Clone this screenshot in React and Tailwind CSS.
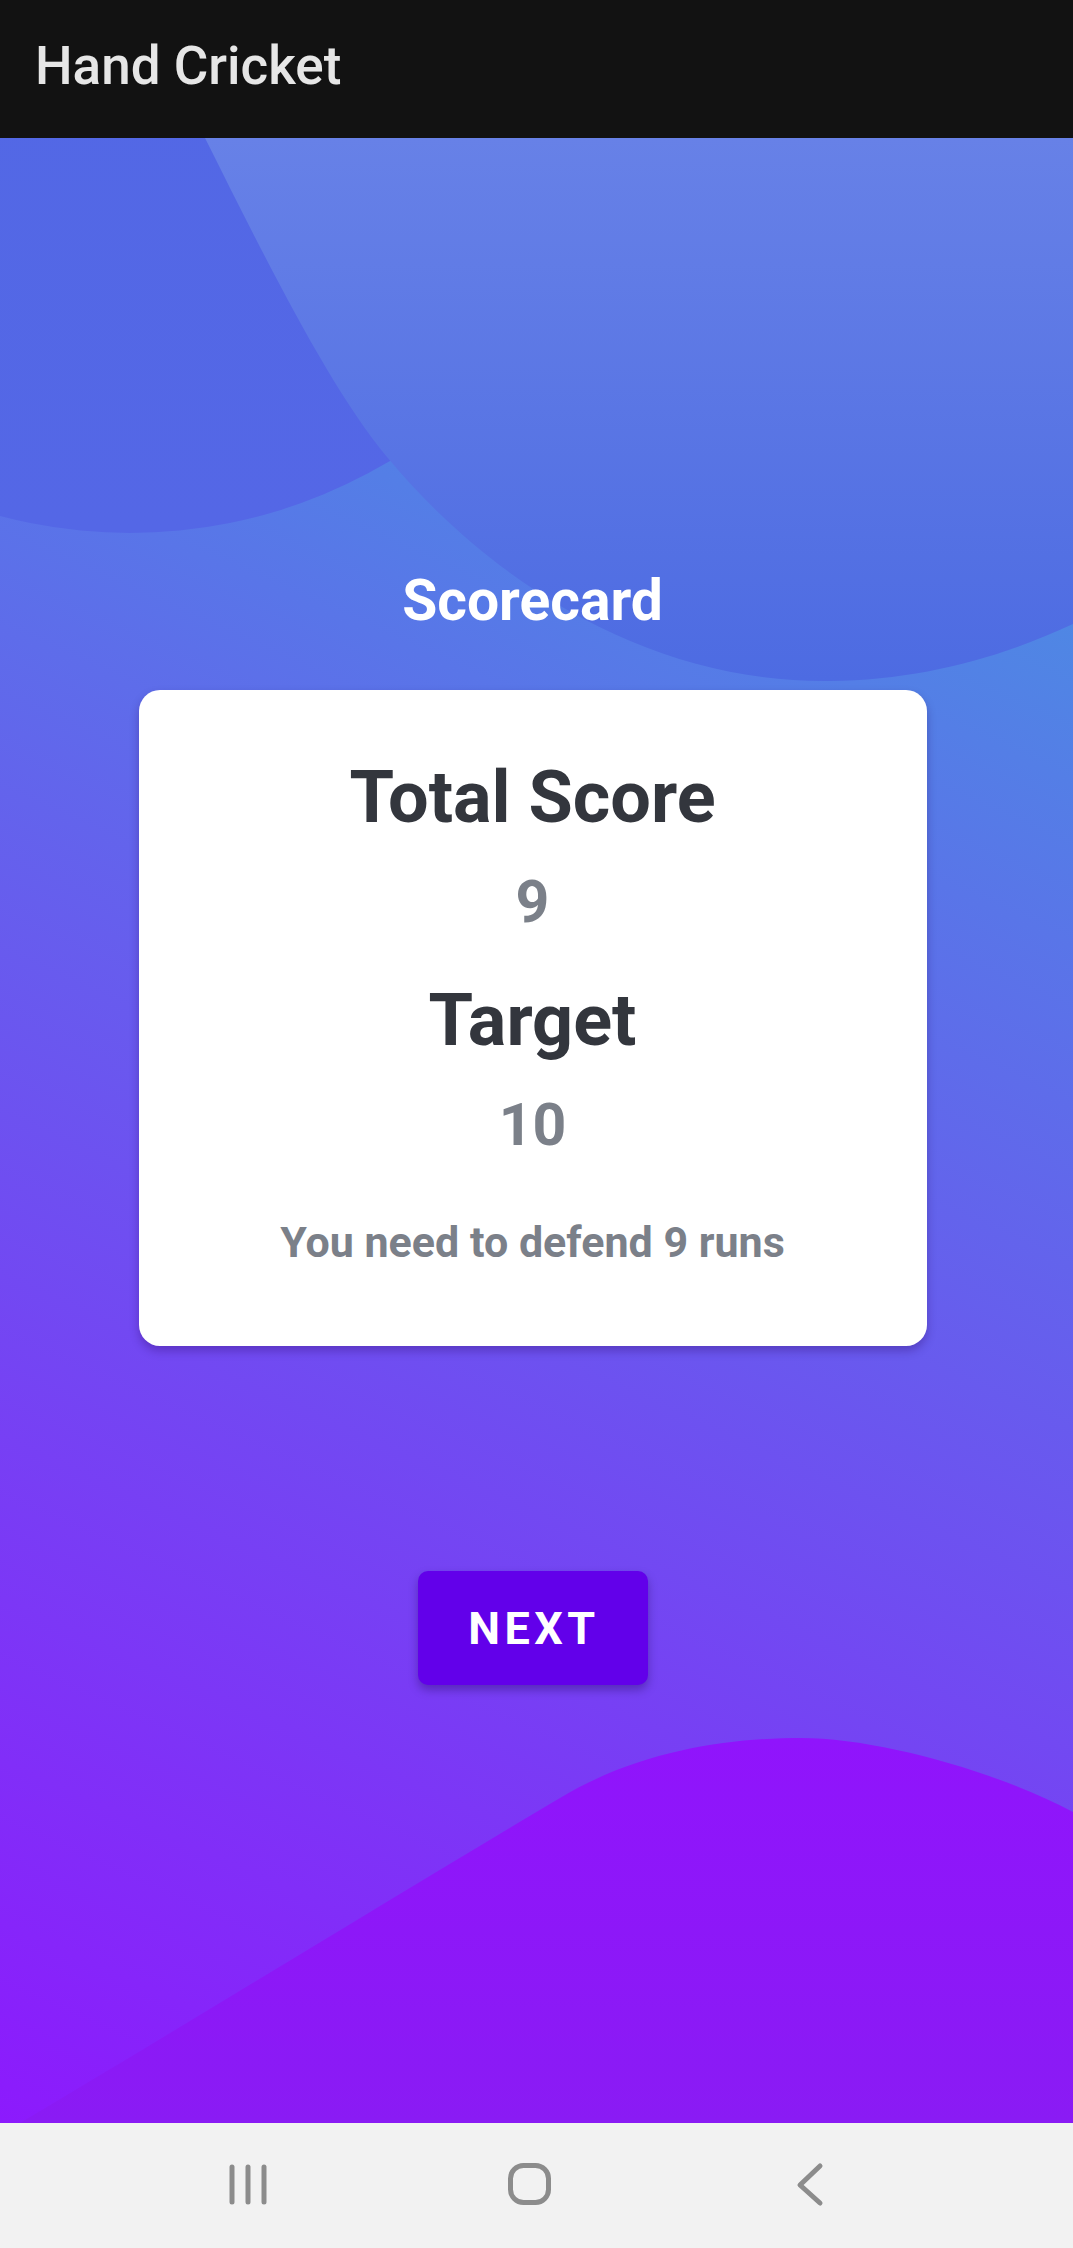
const font = { fontFamily: "Roboto, 'Liberation Sans', sans-serif" };

function Backdrop() {
  return (
    <svg
      className="absolute inset-0 h-full w-full"
      viewBox="0 0 1073 1985"
      preserveAspectRatio="none"
    >
      <defs>
        <linearGradient id="tl" x1="0" y1="0" x2="0" y2="1">
          <stop offset="0" stopColor="#5169e4" />
          <stop offset="1" stopColor="#5467e6" />
        </linearGradient>
        <linearGradient id="big" x1="0" y1="0" x2="0" y2="1">
          <stop offset="0" stopColor="#6781e7" />
          <stop offset="1" stopColor="#4d6be2" />
        </linearGradient>
        <linearGradient id="wave" x1="0" y1="0" x2="0" y2="1">
          <stop offset="0" stopColor="#9014fc" />
          <stop offset="1" stopColor="#8a1bf4" />
        </linearGradient>
      </defs>
      <circle cx="130" cy="-110" r="505" fill="url(#tl)" />
      <path
        d="M205 0 C270 130 330 250 387 319 C500 455 660 545 830 543 C920 542 1000 520 1073 486 L1073 0 Z"
        fill="url(#big)"
      />
      <path
        d="M20 1985 C200 1878 400 1755 560 1660 C640 1612 730 1600 801 1600 C880 1600 1000 1635 1073 1674 L1073 1985 Z"
        fill="url(#wave)"
      />
    </svg>
  );
}

function NavBar() {
  return (
    <div className="flex h-[125px] items-start bg-[#f2f2f2]">
      <svg width="1073" height="125" viewBox="0 0 1073 125">
        <g stroke="#8c8c8c" strokeWidth="5" strokeLinecap="round" fill="none">
          <line x1="232" y1="44" x2="232" y2="79" />
          <line x1="248" y1="44" x2="248" y2="79" />
          <line x1="264" y1="44" x2="264" y2="79" />
          <rect x="510.5" y="42.5" width="38" height="37" rx="13" />
          <polyline points="820,43 800,62 820,80" strokeLinejoin="round" />
        </g>
      </svg>
    </div>
  );
}

export default function App() {
  return (
    <div className="flex h-[2248px] w-[1073px] flex-col overflow-hidden" style={font}>
      <header className="flex h-[138px] items-center bg-[#121212] pb-[5px] pl-[35px]">
        <h1 className="text-[53px] font-medium leading-none text-[#e6e6e6]">Hand Cricket</h1>
      </header>

      <main className="relative flex h-[1985px] flex-col items-center overflow-hidden bg-[linear-gradient(204deg,#4a90e2_13%,#9013fe_105%)] pr-[8px]">
        <Backdrop />

        <div className="relative flex flex-col items-center pt-[434px]">
          <h2 className="text-[57px] font-bold leading-none text-white">Scorecard</h2>

          <div className="mt-[61px] flex h-[656px] w-[788px] flex-col items-center rounded-[21px] bg-white pt-[72px] shadow-[0_5px_10px_rgba(40,0,90,0.3)]">
            <p className="text-[72px] font-bold leading-none text-[#33363d]">Total Score</p>
            <p className="mt-[38px] text-[59px] font-bold leading-none text-[#7b8089]">9</p>
            <p className="mt-[54px] text-[72px] font-bold leading-none text-[#33363d]">Target</p>
            <p className="mt-[38px] text-[59px] font-bold leading-none text-[#7b8089]">10</p>
            <p className="mt-[67px] text-[43px] font-bold leading-none text-[#7b8089]">
              You need to defend 9 runs
            </p>
          </div>

          <button className="mt-[225px] flex h-[114px] w-[230px] items-center justify-center rounded-[10px] bg-[#6200ea] shadow-[0_5px_10px_rgba(30,0,80,0.35)]">
            <span className="pl-[3px] text-[45px] font-bold leading-none tracking-[0.1em] text-white">
              NEXT
            </span>
          </button>
        </div>
      </main>

      <NavBar />
    </div>
  );
}
